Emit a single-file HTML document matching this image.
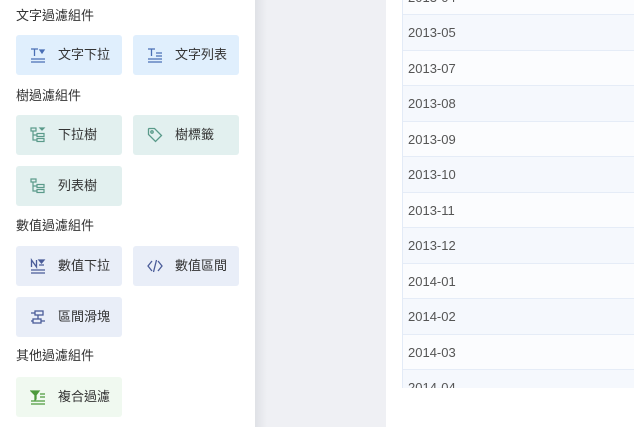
<!DOCTYPE html><html><head><meta charset="utf-8"><style>
body{margin:0;width:634px;height:427px;overflow:hidden;position:relative;background:#fff;font-family:"Liberation Sans","Noto Sans CJK TC",sans-serif}
.left{position:absolute;left:0;top:0;width:255px;height:427px;background:#fff}
.gray{position:absolute;left:255px;top:0;width:131px;height:427px;background:#eff0f4}
.shadow{position:absolute;left:255px;top:0;width:12px;height:427px;background:linear-gradient(to right,#dfe1e6,#eff0f4)}
.t{position:absolute;left:16px;font-size:13px;color:#333;line-height:18px}
.b{position:absolute;width:106px;height:40px;border-radius:3px;font-size:13px;color:#333;line-height:40px}
.b span{position:absolute;left:42px}
.b svg{position:absolute;left:14px;top:12px}
.blue{background:#e0effd}.teal{background:#e2f0ef}.sl{background:#e9eef8}.gr{background:#f0f9f0}
.list{position:absolute;left:402px;top:0;width:232px;height:388px;overflow:hidden;border-left:1px solid #e3ebf7}
.r{height:34.5px;border-bottom:1px solid #e5ecf7;font-size:13px;color:#555;line-height:35px;padding-left:5px}
.r.o{background:#f5f8fd}.r.e{background:#fbfcfe}
</style></head><body>
<div class="left">
<div class="t" style="top:7px">文字過濾組件</div>
<div class="b blue" style="left:16px;top:35px"><svg width="16" height="16" fill="none" stroke="#4a6fb5" stroke-width="1.3"><path d="M1 2h7M4.5 2v7M1 12h14M1 15h14"/><path d="M10 3h4l-2 3z" fill="#4a6fb5"/></svg><span>文字下拉</span></div>
<div class="b blue" style="left:133px;top:35px"><svg width="16" height="16" fill="none" stroke="#4a6fb5" stroke-width="1.3"><path d="M1 2h7M4.5 2v7M9 6h6M9 9h6M1 12h14M1 15h14"/></svg><span>文字列表</span></div>
<div class="t" style="top:87px">樹過濾組件</div>
<div class="b teal" style="left:16px;top:115px"><svg width="16" height="16" fill="none" stroke="#5a9a8a" stroke-width="1.2"><rect x="1" y="1" width="5" height="3"/><path d="M3 4v9h4M3 8h4"/><rect x="7" y="6.5" width="7" height="3"/><rect x="7" y="11.5" width="7" height="3"/><path d="M10 1h4l-2 2z" fill="#5a9a8a"/></svg><span>下拉樹</span></div>
<div class="b teal" style="left:133px;top:115px"><svg width="16" height="16" fill="none" stroke="#5a9a8a" stroke-width="1.3"><path d="M1.5 2v5.5l7 7 6-6-7-7H2z"/><circle cx="5" cy="5" r="1.2"/></svg><span>樹標籤</span></div>
<div class="b teal" style="left:16px;top:166px"><svg width="16" height="16" fill="none" stroke="#5a9a8a" stroke-width="1.2"><rect x="1" y="1" width="5" height="3"/><path d="M3 4v9h4M3 8h4"/><rect x="7" y="6.5" width="7" height="3"/><rect x="7" y="11.5" width="7" height="3"/></svg><span>列表樹</span></div>
<div class="t" style="top:217px">數值過濾組件</div>
<div class="b sl" style="left:16px;top:246px"><svg width="16" height="16" fill="none" stroke="#4a5c99" stroke-width="1.3"><path d="M1.5 9V2l5 7V2M1 12h14M1 15h14M9 7h5"/><path d="M9 2h5l-2.5 3z" fill="#4a5c99"/></svg><span>數值下拉</span></div>
<div class="b sl" style="left:133px;top:246px"><svg width="16" height="16" fill="none" stroke="#4a5c99" stroke-width="1.3"><path d="M5 3L1 8l4 5M11 3l4 5-4 5M9.5 2l-3 12"/></svg><span>數值區間</span></div>
<div class="b sl" style="left:16px;top:297px"><svg width="16" height="16" fill="none" stroke="#4a5c99" stroke-width="1.3"><rect x="5" y="2" width="8" height="4"/><rect x="3" y="10" width="8" height="4"/><path d="M1 4h4M1 12h2M11 12h4M8 6v4"/></svg><span>區間滑塊</span></div>
<div class="t" style="top:347px">其他過濾組件</div>
<div class="b gr" style="left:16px;top:377px"><svg width="16" height="16" fill="none" stroke="#4c9a3c" stroke-width="1.3"><path d="M1 2h8L6 6v4l-1 1V6z" fill="#4c9a3c"/><path d="M10 5h5M10 8h5M1 12h14M1 15h14"/></svg><span>複合過濾</span></div>
</div>
<div class="gray"></div><div class="shadow"></div>
<div class="list"><div style="margin-top:-20.5px">
<div class="r e">2013-04</div><div class="r o">2013-05</div><div class="r e">2013-07</div><div class="r o">2013-08</div><div class="r e">2013-09</div><div class="r o">2013-10</div><div class="r e">2013-11</div><div class="r o">2013-12</div><div class="r e">2014-01</div><div class="r o">2014-02</div><div class="r e">2014-03</div><div class="r o">2014-04</div>
</div></div>
</body></html>
